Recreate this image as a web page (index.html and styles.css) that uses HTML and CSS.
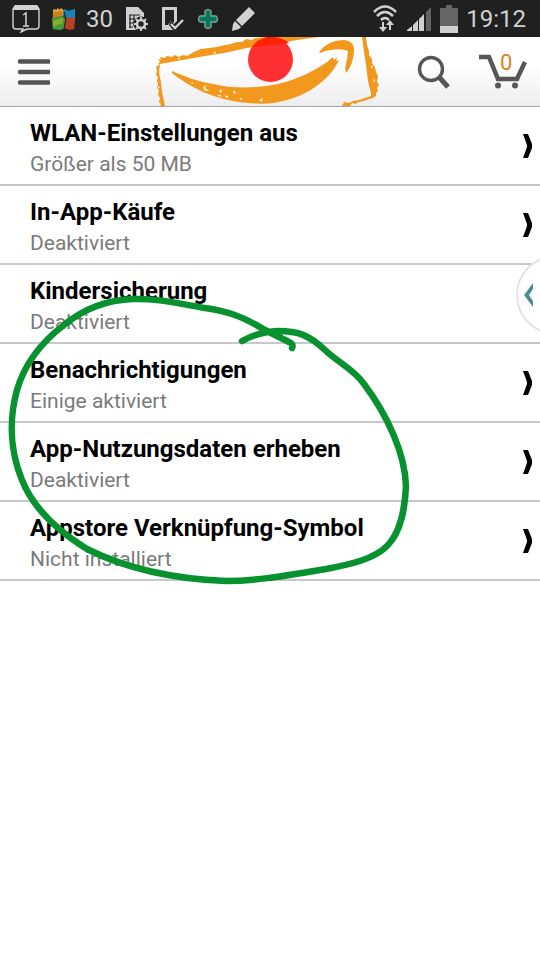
FILE: index.html
```html
<!DOCTYPE html>
<html lang="de">
<head>
<meta charset="utf-8">
<meta name="viewport" content="width=device-width, initial-scale=1">
<title>Einstellungen</title>
<link rel="stylesheet" href="styles.css">
</head>
<body>
<div class="status">
  <div class="status-group">
    <svg width="28" height="28" viewBox="0 0 28 28" aria-hidden="true">
      <path d="M3 1H25L27 4V21Q27 24 24 24H15L9 27L11 24H4Q1 24 1 21V4Z" fill="none" stroke="#d2d2d2" stroke-width="1.4"/>
      <path d="M3 0H25L27 5H1Z" fill="#d2d2d2"/>
      <path d="M11 10L14 8V21M11 21H17" fill="none" stroke="#d2d2d2" stroke-width="1.5"/>
    </svg>
    <svg width="24" height="26" viewBox="0 0 26 26" aria-hidden="true">
      <path d="M1 3L4 2V4L6 1L8 3L10 1L13 4L12 11L1 14Z" fill="#dfaa32"/>
      <path d="M13 2L18 4L25 2V13H15L12 8Z" fill="#1683b5"/>
      <path d="M0 12L11 9L15 14L14 23L9 25L1 24Z" fill="#489b34"/>
      <path d="M15 11L25 12L24 24L19 25L14 23Z" fill="#b84022"/>
      <path d="M1 6L11 4L11 10L1 12Z" fill="#be651f" opacity=".65"/>
      <path d="M1 15L12 12L11 18Q6 18 1 22Z" fill="#a8b52c" opacity=".7"/>
      <path d="M13 5L15 13L13 24" fill="none" stroke="#222" stroke-width="1.2"/>
    </svg>
    <span class="temperature">30</span>
    <svg width="24" height="26" viewBox="0 0 24 26" aria-hidden="true">
      <path d="M1 1H13L19 7V24H1Z" fill="#d0d0d0"/>
      <path d="M4 9H15M4 13H10M4 17H9M4 21H8M5 9V22M9 9V19" stroke="#222" stroke-width="1.2"/>
      <circle cx="16" cy="18" r="7.5" fill="#222"/>
      <circle cx="16" cy="18" r="4" fill="none" stroke="#d0d0d0" stroke-width="2.6"/>
      <path d="M16 11V14M16 22V25M9 18H12M20 18H23M11 13L13 15M19 21L21 23M11 23L13 21M19 15L21 13" stroke="#d0d0d0" stroke-width="2"/>
    </svg>
    <svg width="24" height="26" viewBox="0 0 24 26" aria-hidden="true">
      <path d="M1 1H16V15L13 18L10 15L8 19L12 24H1Z" fill="#d0d0d0"/>
      <path d="M4 4H13V16L12 17L10 15L7 19H4Z" fill="#222"/>
      <path d="M10 18L14 22L22 14" fill="none" stroke="#d0d0d0" stroke-width="2.4"/>
    </svg>
    <svg width="22" height="22" viewBox="0 0 22 22" aria-hidden="true">
      <path d="M8 3Q11 0 14 3V8H19Q22 11 19 14H14V19Q11 22 8 19V14H3Q0 11 3 8H8Z" fill="#08765b" stroke="#7ba596" stroke-width="1.4"/>
    </svg>
    <svg width="24" height="26" viewBox="0 0 24 26" aria-hidden="true">
      <path d="M18 1L24 7L11 20L5 14ZM4 15L10 21L8 23L1 25L2 18Z" fill="#d2d2d2"/>
    </svg>
  </div>
  <div class="status-group status-right">
    <svg width="26" height="28" viewBox="0 0 26 28" aria-hidden="true">
      <path d="M2 7Q13 -4 24 7M5 11Q13 3 21 11M9 15Q13 11 17 15" fill="none" stroke="#d0d0d0" stroke-width="2.5"/>
      <path d="M10 17H12V22H15L11 27L7 22H10ZM17 25H19V20H22L18 15L14 20H17Z" fill="#d0d0d0"/>
    </svg>
    <svg width="26" height="26" viewBox="0 0 26 26" aria-hidden="true">
      <path d="M1 25V24L6 20V25ZM7 19L12 14V25H7ZM13 13L18 8V25H13Z" fill="#d0d0d0"/>
      <path d="M20 6L25 1V25H20Z" fill="#626262"/>
    </svg>
    <svg width="18" height="28" viewBox="0 0 18 28" aria-hidden="true">
      <path d="M0 3H6V0H12V3H18V21H0Z" fill="#656565"/><path d="M0 21H18V28H0Z" fill="#d0d0d0"/>
    </svg>
    <time class="clock">19:12</time>
  </div>
</div>
<header class="header">
  <button class="icon-button menu" aria-label="Menü">
    <svg width="32" height="26" viewBox="0 0 32 26"><path d="M2 2.5H31M2 13H31M2 23.5H31" stroke="#545454" stroke-width="4.4" stroke-linecap="round"/></svg>
  </button>
  <a class="logo" href="#" aria-label="Amazon">
    <svg width="230" height="69" viewBox="0 0 230 69">
      <g fill="#f2981d">
        <path d="M3 27L5 25L3 22L6 23L5 20L9 21L12 19L17 20L20 18L24 20L28 18L32 19L37 16L41 14L46 12L54 11L62 10L70 8L76 7L82 5L87 5L91 2L97 3L100 1L111 0H164L142 3L126 6L114 8L92 11L69 16L44 20L22 24L5 27Z"/>
        <path d="M5 27L1 30L2 34L1 38L3 40L2 44L3 47L2 51L4 54L3 58L5 61L4 65L6 67L5 69H10L9 64L7 55L6 45L4 36Z"/>
        <path d="M207 0H211L212 8L214 14L214 18L217 22L217 26L220 30L221 35L223 39L222 44L224 48L222 51L223 54L221 56L221 59L218 61L214 62L209 64L204 65L200 67L197 66L195 69H187L189 65L194 66L198 64L204 63L210 61L216 59L216 56L213 44L211 28L209 15Z"/>
        <path d="M17 34C29 39 43 45 58 47C77 52 100 51 118 48C140 44 159 34 172 25L178 20L179 23L182 20L181 24L184 23Q179 34 169 43C152 58 136 63 118 66C99 68 78 65 62 60C45 55 28 45 17 36Z"/>
        <path d="M164 15Q173 3 189 3Q200 4 199 15Q198 28 191 36L190 32L192 22L193 14Q186 11 176 13L170 14L166 16Z"/>
      </g>
      <path d="M48 50L52 48L50 51L54 54L50 54ZM64 54L67 52L66 56ZM70 58L74 60L71 61ZM79 53L81 57L78 56ZM62 58H66V60ZM85 61L88 62L85 63ZM104 63L108 61L107 65ZM36 46L38 45V47ZM58 16L61 14L60 17ZM22 21H25V23ZM216 29L218 28L217 32ZM3 49L5 50L3 52ZM218 42L220 43L219 46Z" fill="#fff4d9"/>
      <circle cx="115.5" cy="22.5" r="22.5" fill="#ff3032"/>
      <path d="M97 10L103 4L112 0H119Q128 1 134 6Z" fill="#ff2100"/>
    </svg>
  </a>
  <div class="tools">
    <button class="icon-button" aria-label="Suchen">
      <svg width="36" height="36" viewBox="0 0 36 36"><circle cx="16" cy="15" r="11.5" fill="none" stroke="#565656" stroke-width="3.4"/><path d="M24 23L33 33" stroke="#565656" stroke-width="5"/></svg>
    </button>
    <a class="cart" href="#" aria-label="Einkaufswagen, 0 Artikel">
      <svg width="48" height="36" viewBox="0 0 48 36"><path d="M0 3H10L19 25H38L46 8" fill="none" stroke="#565656" stroke-width="4.5"/><circle cx="19" cy="31.5" r="3" fill="#565656"/><circle cx="36" cy="31.5" r="3" fill="#565656"/></svg>
      <span class="cart-count">0</span>
    </a>
  </div>
</header>
<main class="content">
  <nav aria-label="Einstellungen">
    <ul class="settings">
      <li><a class="row" href="#"><span class="copy"><strong>WLAN-Einstellungen aus</strong><span>Größer als 50 MB</span></span><svg class="chevron" width="11" height="26" viewBox="0 0 11 26" aria-hidden="true"><path d="M1 1H6L10 11V15L6 25H1L5 14V12Z"/></svg></a></li>
      <li><a class="row" href="#"><span class="copy"><strong>In-App-Käufe</strong><span>Deaktiviert</span></span><svg class="chevron" width="11" height="26" viewBox="0 0 11 26" aria-hidden="true"><path d="M1 1H6L10 11V15L6 25H1L5 14V12Z"/></svg></a></li>
      <li><a class="row" href="#"><span class="copy"><strong>Kindersicherung</strong><span>Deaktiviert</span></span></a></li>
      <li><a class="row" href="#"><span class="copy"><strong>Benachrichtigungen</strong><span>Einige aktiviert</span></span><svg class="chevron" width="11" height="26" viewBox="0 0 11 26" aria-hidden="true"><path d="M1 1H6L10 11V15L6 25H1L5 14V12Z"/></svg></a></li>
      <li><a class="row" href="#"><span class="copy"><strong>App-Nutzungsdaten erheben</strong><span>Deaktiviert</span></span><svg class="chevron" width="11" height="26" viewBox="0 0 11 26" aria-hidden="true"><path d="M1 1H6L10 11V15L6 25H1L5 14V12Z"/></svg></a></li>
      <li><a class="row" href="#"><span class="copy"><strong>Appstore Verknüpfung-Symbol</strong><span>Nicht installiert</span></span><svg class="chevron" width="11" height="26" viewBox="0 0 11 26" aria-hidden="true"><path d="M1 1H6L10 11V15L6 25H1L5 14V12Z"/></svg></a></li>
    </ul>
  </nav>
  <button class="edge-handle" aria-label="Seitenleiste öffnen">
    <svg width="24" height="80" viewBox="0 0 24 80"><circle cx="40" cy="40" r="39" fill="#fff" stroke="#e2e4e4" stroke-width="2"/><path d="M17 28V34L13 40L17 46V52L8 40Z" fill="#4a8f98"/></svg>
  </button>
  <svg class="marking" width="420" height="300" viewBox="0 290 420 300" aria-hidden="true">
    <path d="M292 348Q294 344 289 342L265 330C240 315 226 311 205 308C176 303 154 298 133 299C105 300 81 311 64 325C39 344 24 366 17 390C9 419 10 451 22 480C34 510 61 533 87 549C125 568 174 579 226 581C258 581 289 575 326 569C352 564 374 559 387 546C402 531 405 506 406 486C405 454 388 416 364 384C355 370 336 361 325 350C309 335 298 331 278 331Q258 332 242 341" fill="none" stroke="#07922f" stroke-width="6.5" stroke-linecap="round" stroke-linejoin="round"/>
  </svg>
</main>
</body>
</html>
```
FILE: styles.css
```css
* { box-sizing: border-box; }
body {
  margin: 0;
  min-height: 100vh;
  background: #fff;
  color: #000;
  font-family: Roboto, "Liberation Sans", sans-serif;
}
button { padding: 0; border: 0; background: none; }
svg { display: block; flex: none; }
a { color: inherit; text-decoration: none; }
.status {
  display: flex;
  align-items: center;
  justify-content: space-between;
  height: 37px;
  padding: 0 14px 0 12px;
  background: #202020;
  color: #d0d0d0;
}
.status-group { display: flex; align-items: center; gap: 12px; }
.status-right { gap: 8px; }
.temperature, .clock { font-size: 24px; line-height: 36px; }
.temperature { margin-left: -2px; }
.header {
  display: grid;
  grid-template-columns: 1fr auto 1fr;
  align-items: center;
  height: 70px;
  padding: 0 13px;
  border-bottom: 1px solid #a5a5a5;
  background: linear-gradient(#fff 40%, #ededed);
}
.menu { justify-self: start; margin-left: 5px; }
.tools { display: flex; align-items: center; justify-content: flex-end; gap: 28px; }
.cart { position: relative; }
.cart-count {
  position: absolute;
  top: -4px;
  left: 21px;
  color: #d98425;
  font-size: 22px;
  line-height: 26px;
}
.content { position: relative; }
.settings { margin: 0; padding: 0; list-style: none; }
.row {
  display: flex;
  align-items: center;
  justify-content: space-between;
  min-height: 79px;
  padding: 0 7px 0 30px;
  border-bottom: 2px solid #c8c8c8;
}
.copy { display: flex; flex-direction: column; gap: 3px; padding-top: 5px; }
.copy strong { font-size: 24px; font-weight: 700; line-height: 28px; }
.copy span { color: #7b7b7b; font-size: 21px; line-height: 28px; }
.chevron { fill: #000; }
.edge-handle { position: absolute; top: 148px; right: 0; }
.marking { position: absolute; top: 183px; left: 0; pointer-events: none; }
```
